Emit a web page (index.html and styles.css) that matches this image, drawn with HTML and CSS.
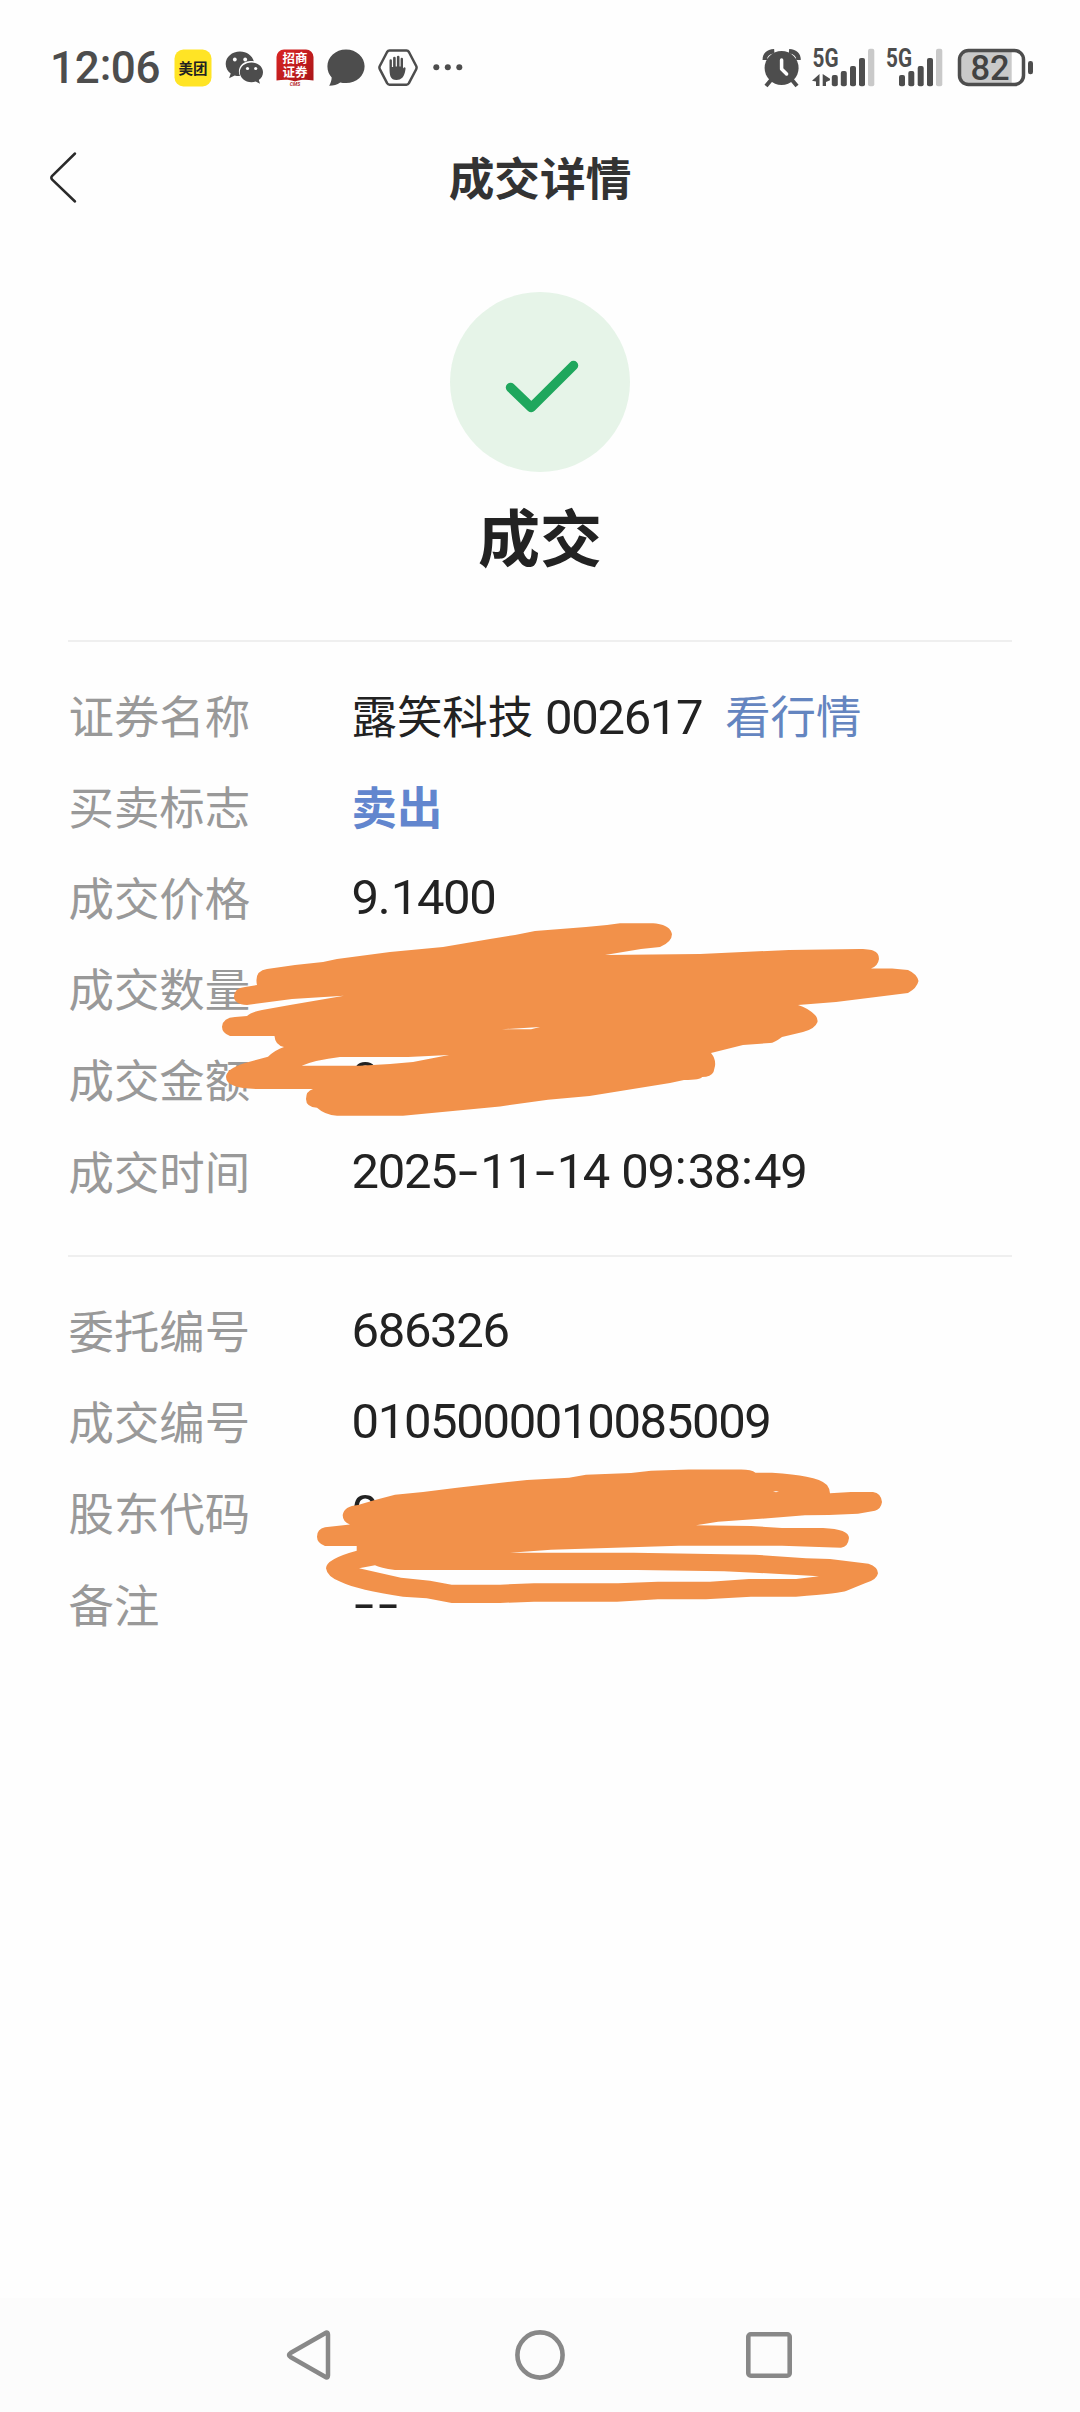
FILE: index.html
```html
<!DOCTYPE html>
<html lang="zh-CN">
<head>
<meta charset="utf-8">
<title>成交详情</title>
<link rel="stylesheet" href="styles.css">
</head>
<body>
<div class="screen">
  <header class="status">
    <div class="clock">12<span class="clock-colon">:</span>06</div>
    <div class="notices">
      <svg class="notice-icon" width="38" height="38" viewBox="0 0 38 38">
        <rect x=".5" y=".5" width="37" height="37" rx="9" fill="#ffe425"/>
        <text x="19" y="24.5" class="meituan">美团</text>
      </svg>
      <svg class="notice-icon" width="38" height="38" viewBox="0 0 38 38">
        <path fill="#4d4d4d" d="M15 2.500C7 2.500.700 8 .700 15c0 4 2 7.300 5 9.600l-1.600 4.600 5.600-2.800c1.600.500 3.300.700 5.300.600C11 17 20 11 28.800 12.300 27.300 6.500 21.700 2.500 15 2.500z"/>
        <path fill="#4d4d4d" d="M26.500 13.500c-6.500 0-11.700 4.300-11.700 9.800s5.200 9.900 11.700 9.900c1.500 0 2.900-.2 4.200-.6l4.300 2.200-1.200-3.700c2.600-1.800 4.200-4.600 4.200-7.800 0-5.500-5-9.800-11.500-9.800z"/>
        <g fill="#fefefe"><circle cx="9.800" cy="10.500" r="1.900"/><circle cx="20.200" cy="10.500" r="1.900"/><circle cx="22.500" cy="19.500" r="1.600"/><circle cx="30.700" cy="19.500" r="1.600"/></g>
      </svg>
      <svg class="notice-icon" width="38" height="38" viewBox="0 0 38 38">
        <defs><linearGradient id="red" x2="1" y2="1"><stop offset="0" stop-color="#da2524"/><stop offset="1" stop-color="#a91518"/></linearGradient></defs>
        <path fill="url(#red)" d="M8 .5h22a7.500 7.500 0 0 1 7.500 7.500v23.500C30 30.500 24 30.500 19 32.500 14 30.500 8 30.500.5 31.500V8A7.500 7.500 0 0 1 8 .5z"/>
        <text x="19" y="14" class="cms">招商</text>
        <text x="19" y="27.500" class="cms">证券</text>
        <text x="19" y="37" class="cms-latin">CMS</text>
      </svg>
      <svg class="notice-icon" width="38" height="38" viewBox="0 0 38 38">
        <path fill="#4d4d4d" d="M19 .4C8.500.4.400 8 .400 17.300c0 5 1.800 8.300 4.300 11.200-.2 3-1 5.700-2.500 8.300 4.300-.2 8-1.300 11-3.400 1.800.500 3.600.700 5.800.700 10.500 0 18.600-7.500 18.600-16.800S29.500.4 19 .4z"/>
      </svg>
      <svg class="notice-icon hex" width="40" height="38" viewBox="0 0 40 38">
        <path fill="none" stroke="#4d4d4d" stroke-width="2.500" stroke-linejoin="round" d="M11.500 1.500h17q1.500 0 2.400 1.500l7.300 14q.8 1.600 0 3.200l-7.300 14q-.9 1.500-2.400 1.500h-17q-1.500 0-2.400-1.500l-7.300-14q-.8-1.600 0-3.200l7.300-14q.9-1.500 2.400-1.500z"/>
        <path fill="#4d4d4d" d="M13 19V11.500q0-1.200 1.200-1.200t1.200 1.200V18h1.200V9q0-1.200 1.300-1.200T19.200 9v8.500h1.200V8q0-1.200 1.300-1.200T23 8v9.500h1.100V10q0-1.200 1.200-1.200t1.200 1.200v9.500q2-2.500 2.600 0-.8 6.500-3.300 9.300Q23.500 31 20 31q-4.500 0-6-3.500-1-2.500-1-8.500z" transform="translate(-1.500)"/>
      </svg>
      <svg width="30" height="38" viewBox="0 0 30 38"><g fill="#4d4d4d"><circle cx="3.300" cy="18.300" r="3"/><circle cx="14.800" cy="18.300" r="3"/><circle cx="26.300" cy="18.300" r="3"/></g></svg>
    </div>
    <svg class="system" width="280" height="40" viewBox="760 47 280 40">
      <g fill="none" stroke="#4d4d4d" stroke-width="4.500">
        <path d="M764.800 60q0-8 9.500-8.700M798.500 60q0-8-9.500-8.700"/>
        <path stroke-width="4" d="M771 80l-5 6M792 80l5 6"/>
      </g>
      <circle cx="781.600" cy="68" r="17" fill="#4d4d4d"/>
      <path d="M781.600 60v9l5 5" fill="none" stroke="#fefefe" stroke-width="3.500" stroke-linecap="round" stroke-linejoin="round"/>
      <text x="812.500" y="67" class="network" textLength="26" lengthAdjust="spacingAndGlyphs">5G</text>
      <g fill="#4d4d4d">
        <path d="M819.500 74v12h-3.500v-4.500l-4-.8zM822.700 74v12h3.300v-4l4-1.800v-1.500z"/>
        <rect x="831.800" y="75" width="6" height="11.300" rx="2"/><rect x="840.800" y="71" width="6" height="15.300" rx="2"/><rect x="850" y="66" width="6" height="20.300" rx="2"/><rect x="859" y="58" width="6" height="28.300" rx="2"/>
        <rect x="899" y="75" width="6" height="11.300" rx="2"/><rect x="908.300" y="71" width="6" height="15.300" rx="2"/><rect x="917.700" y="66" width="6" height="20.300" rx="2"/><rect x="927" y="58" width="6" height="28.300" rx="2"/>
        <rect x="1028" y="61" width="5" height="13.300" rx="2.300"/>
      </g>
      <g fill="#c9c9c9"><rect x="868" y="48.700" width="6.300" height="37.600" rx="2"/><rect x="936" y="48.700" width="6.300" height="37.600" rx="2"/><path d="M968 51h43.700v33.500H968q-8 0-8-8V59q0-8 8-8z"/></g>
      <text x="886" y="67" class="network" textLength="26" lengthAdjust="spacingAndGlyphs">5G</text>
      <rect x="959.500" y="50.500" width="64" height="34" rx="9" fill="none" stroke="#4d4d4d" stroke-width="3.500"/>
      <text x="990" y="79.500" class="battery">82</text>
    </svg>
  </header>

  <nav class="titlebar">
    <svg class="back" width="30" height="54" viewBox="0 0 30 54"><path d="M26 3.500L3 26q-1.300 1.700 0 3.400L26 51.500" fill="none" stroke="#2a2a2a" stroke-width="2.500" stroke-linecap="round"/></svg>
    <h1 class="title">成交详情</h1>
  </nav>

  <main class="content">
    <section class="result">
      <svg width="180" height="180" viewBox="0 0 180 180"><circle cx="90" cy="90" r="90" fill="#e6f4e8"/><path d="M60.500 95.500L81.300 115.500 123.500 73.500" fill="none" stroke="#1fa75d" stroke-width="9.500" stroke-linecap="round" stroke-linejoin="round"/></svg>
      <h2 class="result-text">成交</h2>
    </section>

    <dl class="details">
      <div class="row"><dt>证券名称</dt><dd>露笑科技<span class="num code">002617</span><a class="link">看行情</a></dd></div>
      <div class="row"><dt>买卖标志</dt><dd class="sell">卖出</dd></div>
      <div class="row"><dt>成交价格</dt><dd class="num">9<span class="dot">.</span>1400</dd></div>
      <div class="row"><dt>成交数量</dt><dd></dd></div>
      <div class="row"><dt>成交金额</dt><dd class="num">8</dd></div>
      <div class="row"><dt>成交时间</dt><dd class="num">2025<span class="dash">-</span>11<span class="dash">-</span>14 09<span class="colon">:</span>38<span class="colon">:</span>49</dd></div>
    </dl>
    <dl class="details">
      <div class="row"><dt>委托编号</dt><dd class="num">686326</dd></div>
      <div class="row"><dt>成交编号</dt><dd class="num">0105000010085009</dd></div>
      <div class="row"><dt>股东代码</dt><dd class="num">0</dd></div>
      <div class="row"><dt>备注</dt><dd class="num"><span class="dash">-</span><span class="dash">-</span></dd></div>
    </dl>
  </main>

  <footer class="navbar">
    <svg width="50" height="54" viewBox="0 0 50 54"><path d="M40 4.700L4.500 25q-3 2 0 4L40 49.300q2 .5 2-2V6.700q0-2.500-2-2z" fill="none" stroke="#888" stroke-width="4.500" stroke-linejoin="round"/></svg>
    <svg width="54" height="54" viewBox="0 0 54 54"><circle cx="27" cy="27" r="22.600" fill="none" stroke="#888" stroke-width="4.600"/></svg>
    <svg width="50" height="54" viewBox="0 0 50 54"><rect x="4.300" y="6.300" width="41.400" height="41.400" rx="2.500" fill="none" stroke="#888" stroke-width="4.600"/></svg>
  </footer>

  <svg class="redaction" width="1080" height="720" viewBox="0 900 1080 720">
    <path d="M257 985Q254 971 267 969L295 965 323 962 337 959 390 952 443 947 490 939 515 935 535 931 586 927 607 925 620 923.300H650C668 923.500 671 930 672 934Q672 942 660 947L641 949 605 955 700 954 789 950 860 949C876 949 879 953 879 959Q878 966 871 968.500H892L908 970Q917 974 918.500 981 917 988 908 993L892 995 836 1002 798 1005Q808 1008 815 1015 818 1018 817.500 1022 815 1029 803 1032L782 1037Q774 1043 770 1043L743 1045 711 1053Q716 1059 715 1066L713.500 1072Q711 1077 702 1077 701 1080 684 1080L670 1083 589.500 1096 548 1099.700 500 1106.500 403 1115.700H337Q325 1115 317 1107.700 306 1107 306 1099 306 1091 313 1089H260Q226 1089 226 1077 226 1069 245 1063L268 1056.700 Q275 1050 284 1047 275 1045 274.500 1036H230Q222 1033 222 1026.700 223 1017.500 235 1017L247 1016Q251 1012 262 1010L290 1005 344 995.700 292 999 247 1005Q234 1004 234 996.700 234 988 245 987ZM301.700 1065.700H360L390 1064 413 1062 449 1055 408 1057H340Q315 1060 301.700 1065.700ZM501.700 1029.300H531L540 1027Z"/>
    <path d="M350 1524.500Q342.500 1522 342.700 1515 344 1506 358 1505L375 1500 395 1494.700 423 1492 457 1487.700 490 1484 527 1480 569 1477.700 586 1474.700 631 1473 651 1470.700 689 1469.500H738Q751 1469 755.500 1472.700H772Q794 1474 806.500 1476.700 821 1479 827 1485 830 1489 830 1493.300L851 1492H873Q881 1493 882 1502 881 1509 875 1510.700L858 1513.700 829 1515 805 1515.300 768 1518.300 718 1521.700 696 1525.300 751 1526 782 1528H823Q849 1529 849 1538 848 1547 841 1547.700L782 1545.700H679L551 1549.700 510 1552.700H634L755 1554.700 806 1558.300 830 1559 868.500 1563.700Q878 1567 878 1573.300 877 1580 865 1583.300L846 1591Q842 1593 796 1596.700H751L706 1599.300H658L617 1601.700H534L500 1603H451.700L426.700 1598.300 403 1596.700 Q358 1590 341 1582 327 1577 326 1568.300 326 1559 356.700 1550.700V1546H325Q317 1543 317 1536.700 317 1529 325 1527.300ZM359 1568.300L401 1577.700 430 1580.700 451.700 1584.700H500L534 1583.300H618L658 1581.700H710L749 1579H796L819 1576.300 755 1572.700 724 1571.300 637 1570H395Q380 1568 375 1565.300ZM773 1491.300H779L776 1492.300Z"/>
  </svg>
</div>
</body>
</html>
```
FILE: styles.css
```css
* { box-sizing: border-box; }
body { margin: 0; background: #fefefe; }
.screen {
  position: relative;
  width: 1080px;
  height: 2412px;
  display: flex;
  flex-direction: column;
  background: #fefefe;
  color: #222;
  font-family: "Noto Sans CJK SC", sans-serif;
  overflow: hidden;
}
.status {
  height: 117px;
  display: flex;
  align-items: flex-start;
  padding: 49px 40px 0 50px;
}
.clock {
  width: 124px;
  height: 38px;
  font: 500 44px/39px Roboto, sans-serif;
  letter-spacing: -0.2px;
  color: #4d4d4d;
  white-space: nowrap;
}
.clock-colon {
  display: inline-block;
  width: 11px;
  transform: translateY(-3px);
}
.notices { display: flex; gap: 13px; }
.notice-icon { flex: none; }
.hex { margin-right: 2px; }
.system { margin: -2px 0 0 auto; overflow: visible; }
.meituan {
  font: 700 14.5px "Noto Sans CJK SC", sans-serif;
  text-anchor: middle;
  fill: #222;
}
.cms {
  font: 700 12.5px "Noto Sans CJK SC", sans-serif;
  text-anchor: middle;
  fill: #fff;
}
.cms-latin {
  font: italic 700 5px Roboto, sans-serif;
  text-anchor: middle;
  fill: #b5292c;
}
.network { font: 700 25.5px Roboto, sans-serif; fill: #4d4d4d; }
.battery {
  font: 500 34.5px Roboto, sans-serif;
  text-anchor: middle;
  fill: #424242;
}
.titlebar {
  height: 120px;
  display: grid;
  grid-template-columns: 1fr auto 1fr;
  align-items: center;
  padding: 0 49px;
}
.title {
  margin: 0;
  padding-bottom: 3px;
  font-size: 45.7px;
  line-height: 66px;
  font-weight: 700;
  color: #333;
}
.content {
  flex: 1;
  padding: 55px 68px 0;
}
.result {
  height: 348px;
  display: flex;
  flex-direction: column;
  align-items: center;
}
.result-text {
  margin: 18px 0 0;
  font-size: 62px;
  line-height: 90px;
  font-weight: 700;
}
.details {
  margin: 0;
  padding: 26px 0 40.3px;
  border-top: 2px solid #efefef;
}
.row {
  display: grid;
  grid-template-columns: 283.5px 1fr;
  height: 91.2px;
  align-items: center;
  font-size: 45.4px;
  line-height: 66px;
}
dt { color: #999; padding-left: 0.5px; }
dd { margin: 0; white-space: nowrap; }
.sell { color: #6286ce; font-weight: 700; }
.link { color: #6485c0; margin-left: 23px; }
.num {
  font-family: Roboto, sans-serif;
  font-size: 49px;
  letter-spacing: -1.35px;
  word-spacing: 1.4px;
}
dd.num { padding-top: 4px; }
.code { margin-left: 12px; line-height: 1; }
.dot, .colon, .dash {
  display: inline-block;
  text-align: center;
  letter-spacing: 0;
}
.dot { width: 13px; }
.colon { width: 14px; transform: translateY(-4px); }
.dash { width: 24px; transform: scaleX(1.45); }
.navbar {
  height: 114px;
  display: flex;
  align-items: center;
  justify-content: space-between;
  padding: 0 286px;
  background: #fcfcfc;
}
.redaction {
  position: absolute;
  left: 0;
  top: 900px;
  fill: #f2914a;
  fill-rule: evenodd;
}
```
